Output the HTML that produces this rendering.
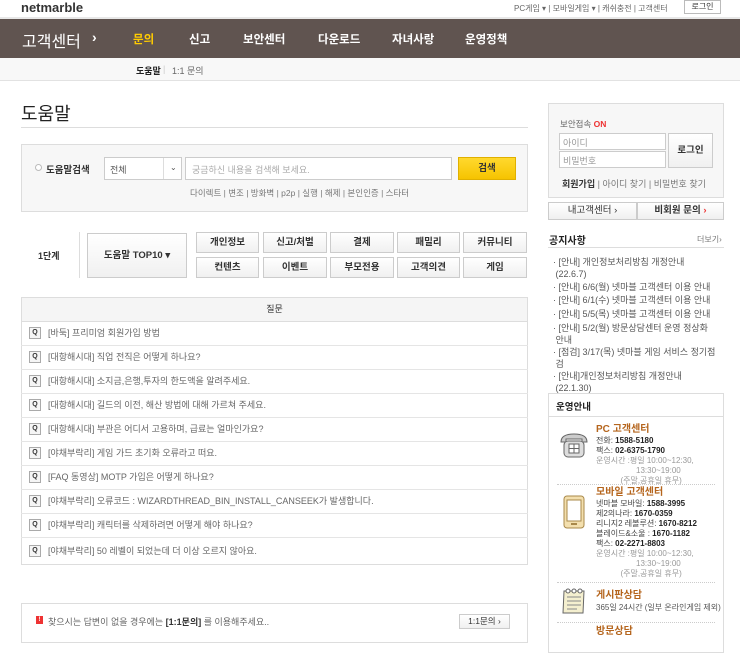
<!DOCTYPE html>
<html><head><meta charset="utf-8"><style>
*{margin:0;padding:0;box-sizing:border-box}
body{width:740px;height:637px;overflow:hidden;background:#fff;font-family:"Liberation Sans","Noto Sans CJK KR",sans-serif;color:#555;font-size:9px;position:relative}
.a{position:absolute;white-space:nowrap}
.nav{position:absolute;left:0;top:19px;width:740px;height:39px;background:#605450}
.nav .a{color:#fff;font-size:11.5px;font-weight:bold;top:12px}
.sub{position:absolute;left:0;top:58px;width:740px;height:23px;background:#f8f8f8;border-bottom:1px solid #e2e2e2}
.box{position:absolute;border:1px solid #ddd}
.btn{position:absolute;border:1px solid #ccc;background:linear-gradient(#fff,#f0f0f0);text-align:center;font-size:9.5px;color:#333;font-weight:bold}
.row{position:absolute;left:21px;width:507px;height:24px;border-bottom:1px solid #e5e5e5;font-size:9px;color:#666}
.row .q{position:absolute;left:8px;top:5px;width:12px;height:12px;border:1px solid #aaa;background:#f5f5f5;font-size:7px;font-weight:bold;color:#333;text-align:center;line-height:10px}
.row span{position:absolute;left:27px;top:4px;white-space:nowrap}
.nl{position:absolute;left:553px;font-size:9px;color:#555;line-height:12px;width:170px}
.or{color:#b5651d;font-weight:bold;font-size:10px;line-height:11px}
.b{color:#222;font-weight:bold}
.inf{font-size:8px;line-height:10px;color:#444}
</style></head><body>
<div class="a" style="left:21px;top:0px;font-size:13px;font-weight:bold;color:#333">netmarble</div>
<div class="a" style="left:514px;top:3px;font-size:8px;color:#666">PC게임 ▾ | 모바일게임 ▾ | 캐쉬충전 | 고객센터</div>
<div class="a" style="left:684px;top:0px;width:37px;height:14px;border:1px solid #bbb;font-size:8px;color:#333;text-align:center;line-height:12px">로그인</div>
<div style="position:absolute;left:0;top:17px;width:740px;height:2px;background:#e8e8e8"></div>
<div class="nav">
<div class="a" style="left:22px;top:9px;font-size:16px;font-weight:normal">고객센터</div>
<div class="a" style="left:92px;top:10px;font-size:14px">›</div>
<div class="a" style="left:133px;color:#ffcc00">문의</div>
<div class="a" style="left:189px">신고</div>
<div class="a" style="left:243px">보안센터</div>
<div class="a" style="left:318px">다운로드</div>
<div class="a" style="left:392px">자녀사랑</div>
<div class="a" style="left:465px">운영정책</div>
</div>
<div class="sub">
<div class="a" style="left:136px;top:6px;font-size:9px;font-weight:bold;color:#222">도움말</div>
<div class="a" style="left:163px;top:6px;font-size:9px;color:#ccc">|</div>
<div class="a" style="left:172px;top:6px;font-size:9px;color:#666">1:1 문의</div>
</div>
<div class="a" style="left:21px;top:100px;font-size:18px;color:#222">도움말</div>
<div style="position:absolute;left:21px;top:127px;width:507px;height:1px;background:#ddd"></div>

<div class="box" style="left:21px;top:144px;width:507px;height:68px;background:#f7f7f7"></div>
<div class="a" style="left:35px;top:164px;width:7px;height:7px;border:1px solid #bbb;border-radius:50%;background:#fff"></div>
<div class="a" style="left:46px;top:162px;font-size:9.5px;color:#333;font-weight:bold">도움말검색</div>
<div class="a" style="left:104px;top:157px;width:78px;height:23px;border:1px solid #ccc;background:#fff;font-size:9px;color:#555;padding:5px 5px"><span>전체</span><span style="position:absolute;left:58px;top:0;height:21px;border-left:1px solid #ddd;padding:5px 6px;font-size:8px">⌄</span></div>
<div class="a" style="left:185px;top:157px;width:267px;height:23px;border:1px solid #ccc;background:#fff;font-size:9px;color:#aaa;padding:5px 6px">궁금하신 내용을 검색해 보세요.</div>
<div class="a" style="left:458px;top:157px;width:58px;height:23px;background:linear-gradient(#ffd92e,#f6c300);border:1px solid #e0b000;color:#333;font-weight:bold;font-size:9.5px;text-align:center;line-height:21px">검색</div>
<div class="a" style="left:190px;top:187px;font-size:8.5px;color:#777">다이렉트 | 변조 | 방화벽 | p2p | 실행 | 해제 | 본인인증 | 스타터</div>

<div class="a" style="left:38px;top:249px;font-size:9px;font-weight:bold;color:#333">1단계</div>
<div style="position:absolute;left:79px;top:232px;width:1px;height:46px;background:#ddd"></div>
<div class="btn" style="left:87px;top:233px;width:100px;height:45px;line-height:43px">도움말 TOP10 ▾</div>
<div class="btn" style="left:196px;top:232px;width:63px;height:21px;line-height:19px">개인정보</div>
<div class="btn" style="left:263px;top:232px;width:64px;height:21px;line-height:19px">신고/처벌</div>
<div class="btn" style="left:330px;top:232px;width:64px;height:21px;line-height:19px">결제</div>
<div class="btn" style="left:397px;top:232px;width:63px;height:21px;line-height:19px">패밀리</div>
<div class="btn" style="left:463px;top:232px;width:64px;height:21px;line-height:19px">커뮤니티</div>
<div class="btn" style="left:196px;top:257px;width:63px;height:21px;line-height:19px">컨텐츠</div>
<div class="btn" style="left:263px;top:257px;width:64px;height:21px;line-height:19px">이벤트</div>
<div class="btn" style="left:330px;top:257px;width:64px;height:21px;line-height:19px">부모전용</div>
<div class="btn" style="left:397px;top:257px;width:63px;height:21px;line-height:19px">고객의견</div>
<div class="btn" style="left:463px;top:257px;width:64px;height:21px;line-height:19px">게임</div>

<div class="box" style="left:21px;top:297px;width:507px;height:268px"></div>
<div class="a" style="left:22px;top:298px;width:505px;height:24px;background:#f5f5f5;border-bottom:1px solid #ddd;text-align:center;line-height:23px;font-size:9px;color:#333">질문</div>
<div class="row" style="top:322px"><div class="q">Q</div><span>[바둑] 프리미엄 회원가입 방법</span></div>
<div class="row" style="top:346px"><div class="q">Q</div><span>[대항해시대] 직업 전직은 어떻게 하나요?</span></div>
<div class="row" style="top:370px"><div class="q">Q</div><span>[대항해시대] 소지금,은행,투자의 한도액을 알려주세요.</span></div>
<div class="row" style="top:394px"><div class="q">Q</div><span>[대항해시대] 길드의 이전, 해산 방법에 대해 가르쳐 주세요.</span></div>
<div class="row" style="top:418px"><div class="q">Q</div><span>[대항해시대] 부관은 어디서 고용하며, 급료는 얼마인가요?</span></div>
<div class="row" style="top:442px"><div class="q">Q</div><span>[야채부락리] 게임 가드 초기화 오류라고 떠요.</span></div>
<div class="row" style="top:466px"><div class="q">Q</div><span>[FAQ 동영상] MOTP 가입은 어떻게 하나요?</span></div>
<div class="row" style="top:490px"><div class="q">Q</div><span>[야채부락리] 오류코드 : WIZARDTHREAD_BIN_INSTALL_CANSEEK가 발생합니다.</span></div>
<div class="row" style="top:514px"><div class="q">Q</div><span>[야채부락리] 캐릭터를 삭제하려면 어떻게 해야 하나요?</span></div>
<div class="row" style="top:540px;border:none"><div class="q">Q</div><span>[야채부락리] 50 레벨이 되었는데 더 이상 오르지 않아요.</span></div>

<div class="box" style="left:21px;top:603px;width:507px;height:40px"></div>
<div class="a" style="left:36px;top:616px;width:7px;height:8px;background:#e33;color:#fff;font-size:6px;text-align:center;line-height:8px;font-weight:bold">!</div>
<div class="a" style="left:48px;top:615px;font-size:9px;color:#666">찾으시는 답변이 없을 경우에는 <b style="color:#333">[1:1문의]</b> 를 이용해주세요..</div>
<div class="btn" style="left:459px;top:614px;width:51px;height:15px;line-height:13px;font-weight:normal;font-size:8.5px">1:1문의 ›</div>

<!-- right -->
<div class="box" style="left:548px;top:103px;width:176px;height:95px;background:#f7f7f7"></div>
<div class="a" style="left:560px;top:118px;font-size:8.5px;color:#666">보안접속 <b style="color:#e33">ON</b></div>
<div class="a" style="left:559px;top:133px;width:107px;height:17px;border:1px solid #ccc;background:#fff;font-size:9px;color:#999;padding:2px 3px">아이디</div>
<div class="a" style="left:559px;top:151px;width:107px;height:17px;border:1px solid #ccc;background:#fff;font-size:9px;color:#999;padding:2px 3px">비밀번호</div>
<div class="btn" style="left:668px;top:133px;width:45px;height:35px;line-height:33px">로그인</div>
<div class="a" style="left:562px;top:177px;font-size:9px;color:#777"><b style="color:#333">회원가입</b> | 아이디 찾기 | 비밀번호 찾기</div>
<div class="btn" style="left:548px;top:202px;width:89px;height:18px;line-height:16px;font-weight:normal">내고객센터 ›</div>
<div class="btn" style="left:637px;top:202px;width:87px;height:18px;line-height:16px">비회원 문의 <span style="color:#e33">›</span></div>
<div class="a" style="left:549px;top:232px;font-size:10px;font-weight:bold;color:#222">공지사항</div>
<div class="a" style="left:697px;top:234px;font-size:8px;color:#777">더보기›</div>
<div style="position:absolute;left:548px;top:247px;width:176px;height:1px;background:#ddd"></div>
<div class="nl" style="top:256px">· [안내] 개인정보처리방침 개정안내<br>&nbsp;(22.6.7)</div>
<div class="nl" style="top:281px">· [안내] 6/6(월) 넷마블 고객센터 이용 안내</div>
<div class="nl" style="top:294px">· [안내] 6/1(수) 넷마블 고객센터 이용 안내</div>
<div class="nl" style="top:308px">· [안내] 5/5(목) 넷마블 고객센터 이용 안내</div>
<div class="nl" style="top:322px">· [안내] 5/2(월) 방문상담센터 운영 정상화<br>&nbsp;안내</div>
<div class="nl" style="top:346px">· [점검] 3/17(목) 넷마블 게임 서비스 정기점<br>&nbsp;검</div>
<div class="nl" style="top:370px">· [안내]개인정보처리방침 개정안내<br>&nbsp;(22.1.30)</div>

<div class="box" style="left:548px;top:393px;width:176px;height:260px"></div>
<div class="a" style="left:556px;top:399px;font-size:9.5px;font-weight:bold;color:#222">운영안내</div>
<div style="position:absolute;left:549px;top:416px;width:174px;height:1px;background:#ddd"></div>
<svg class="a" style="left:558px;top:432px" width="32" height="28" viewBox="0 0 32 28"><path d="M3 10 Q3 2 16 2 Q29 2 29 10 L24 10 L24 7 L8 7 L8 10Z" fill="#ccc" stroke="#666"/><rect x="6" y="9" width="20" height="16" rx="4" fill="#ddd" stroke="#666"/><rect x="11" y="12" width="10" height="9" fill="#fff" stroke="#666"/><path d="M16 12v9M11 16.5h10" stroke="#666"/></svg>
<div class="a or" style="left:596px;top:424px">PC 고객센터</div>
<div class="a inf" style="left:596px;top:436px">전화: <b class="b">1588-5180</b><br>팩스: <b class="b">02-6375-1790</b><br><span style="color:#999">운영시간 :평일 10:00~12:30,<br>&nbsp;&nbsp;&nbsp;&nbsp;&nbsp;&nbsp;&nbsp;&nbsp;&nbsp;&nbsp;&nbsp;&nbsp;&nbsp;&nbsp;&nbsp;&nbsp;&nbsp;&nbsp;13:30~19:00<br>&nbsp;&nbsp;&nbsp;&nbsp;&nbsp;&nbsp;&nbsp;&nbsp;&nbsp;&nbsp;&nbsp;(주말,공휴일 휴무)</span></div>
<div style="position:absolute;left:557px;top:484px;width:158px;border-top:1px dotted #ccc"></div>
<svg class="a" style="left:563px;top:495px" width="22" height="34" viewBox="0 0 22 34"><rect x="1" y="1" width="20" height="32" rx="3" fill="#f3dfae" stroke="#a8884a"/><rect x="4" y="5" width="14" height="21" fill="#fff" stroke="#a8884a"/><rect x="8" y="28" width="6" height="2" fill="#a8884a"/></svg>
<div class="a or" style="left:596px;top:487px">모바일 고객센터</div>
<div class="a inf" style="left:596px;top:499px">넷마블 모바일: <b class="b">1588-3995</b><br>제2의나라: <b class="b">1670-0359</b><br>리니지2 레볼루션: <b class="b">1670-8212</b><br>블레이드&amp;소울 : <b class="b">1670-1182</b><br>팩스: <b class="b">02-2271-8803</b><br><span style="color:#999">운영시간 :평일 10:00~12:30,<br>&nbsp;&nbsp;&nbsp;&nbsp;&nbsp;&nbsp;&nbsp;&nbsp;&nbsp;&nbsp;&nbsp;&nbsp;&nbsp;&nbsp;&nbsp;&nbsp;&nbsp;&nbsp;13:30~19:00<br>&nbsp;&nbsp;&nbsp;&nbsp;&nbsp;&nbsp;&nbsp;&nbsp;&nbsp;&nbsp;&nbsp;(주말,공휴일 휴무)</span></div>
<div style="position:absolute;left:557px;top:582px;width:158px;border-top:1px dotted #ccc"></div>
<svg class="a" style="left:561px;top:587px" width="26" height="28" viewBox="0 0 26 28"><path d="M3 4 L23 4 L22 26 L2 26Z" fill="#f4efcf" stroke="#666"/><path d="M6 10h14M6 14h14M6 18h14M6 22h10" stroke="#888"/><circle cx="7" cy="4" r="2" fill="#fff" stroke="#666"/><circle cx="13" cy="4" r="2" fill="#fff" stroke="#666"/><circle cx="19" cy="4" r="2" fill="#fff" stroke="#666"/></svg>
<div class="a or" style="left:596px;top:590px">게시판상담</div>
<div class="a" style="left:596px;top:602px;font-size:8px;color:#555">365일 24시간 (일부 온라인게임 제외)</div>
<div style="position:absolute;left:557px;top:622px;width:158px;border-top:1px dotted #ccc"></div>
<div class="a or" style="left:596px;top:626px">방문상담</div>
</body></html>
